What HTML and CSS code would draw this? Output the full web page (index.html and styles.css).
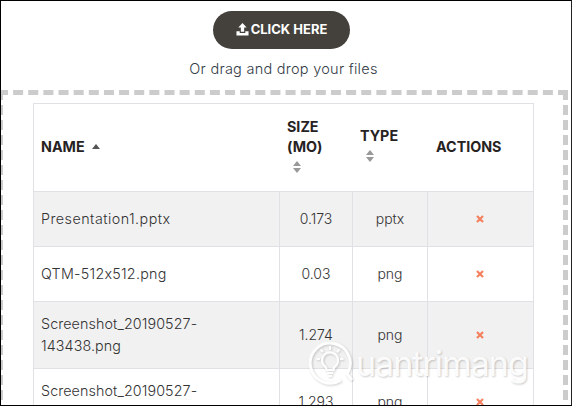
FILE: index.html
```html
<!DOCTYPE html>
<html lang="en">
<head>
<meta charset="utf-8">
<title>Upload</title>
<link rel="stylesheet" href="styles.css">
</head>
<body>
<main class="frame">
  <section class="upload">
    <button class="upload-btn" type="button">
      <svg class="upload-icon" viewBox="0 0 14 14" aria-hidden="true"><path d="M7 0 L11.500 4.800 H8.800 V9.500 H5.200 V4.800 H2.500 Z" fill="#fff"/><path d="M0.500 9 H4 V10.800 H10 V9 H13.500 V13.500 H0.500 Z" fill="#fff"/></svg>
      <span>CLICK HERE</span>
    </button>
    <p class="hint">Or drag and drop your files</p>
  </section>
  <section class="dropzone">
    <table class="files">
      <colgroup><col class="c1"><col class="c2"><col class="c3"><col class="c4"></colgroup>
      <thead>
        <tr>
          <th class="head-name"><div class="name-head">NAME <span class="sort-up"></span></div></th>
          <th class="head-size">SIZE<br>(MO)<span class="sort"><i class="up"></i><i class="down"></i></span></th>
          <th class="head-type">TYPE<span class="sort"><i class="up"></i><i class="down"></i></span></th>
          <th class="head-actions">ACTIONS</th>
        </tr>
      </thead>
      <tbody>
        <tr class="short alt"><td class="fname">Presentation1.pptx</td><td class="ctr">0.173</td><td class="ctr">pptx</td><td class="ctr act"><svg class="del" viewBox="0 0 8 8" aria-hidden="true"><path d="M1 1 L7 7 M7 1 L1 7"/></svg></td></tr>
        <tr class="short"><td class="fname mid">QTM-512x512.png</td><td class="ctr">0.03</td><td class="ctr">png</td><td class="ctr act"><svg class="del" viewBox="0 0 8 8" aria-hidden="true"><path d="M1 1 L7 7 M7 1 L1 7"/></svg></td></tr>
        <tr class="tall alt"><td class="fname long">Screenshot_20190527-<br>143438.png</td><td class="ctr">1.274</td><td class="ctr">png</td><td class="ctr act"><svg class="del" viewBox="0 0 8 8" aria-hidden="true"><path d="M1 1 L7 7 M7 1 L1 7"/></svg></td></tr>
        <tr class="tall"><td class="fname long">Screenshot_20190527-<br>143439.png</td><td class="ctr">1.293</td><td class="ctr">png</td><td class="ctr act"><svg class="del" viewBox="0 0 8 8" aria-hidden="true"><path d="M1 1 L7 7 M7 1 L1 7"/></svg></td></tr>
      </tbody>
    </table>
  </section>
  <div class="watermark">
    <svg class="bulb" viewBox="0 0 46 48" aria-hidden="true">
      <g fill="none" stroke="#fff">
        <path d="M33 41 A20 20 0 1 1 39 35 L44 41" stroke-width="3"/>
        <path d="M17.500 28 a8 8 0 1 1 9 0 q-1 1 -1 3 h-7 q0 -2 -1 -3Z" stroke-width="2.200"/>
        <path d="M19 34h6M20 37h4M22 7v4M12.500 10.500l2.500 2.500M31.500 10.500l-2.500 2.500M8.500 20h3.500M32 20h3.500" stroke-width="2"/>
      </g>
    </svg>
    <span class="wm-text">uantrimang</span>
  </div>
</main>
</body>
</html>
```
FILE: styles.css
```css
* { box-sizing: border-box; }
html, body { margin: 0; padding: 0; background: #fff; }
body { width: 572px; height: 406px; overflow: hidden; font-family: Inter, "Open Sans", sans-serif; font-feature-settings: "calt" 0; color: #3d3d3d; }
.frame { position: relative; width: 572px; height: 406px; overflow: hidden; border-top: 1px solid #000; border-left: 1px solid #000; border-right: 1px solid #222; border-bottom: 1px solid #000; }
.upload { display: flex; flex-direction: column; align-items: center; padding-top: 10px; height: 89px; }
.upload-btn { display: flex; align-items: center; justify-content: center; gap: 2px; width: 137px; height: 38px; margin-right: 9px; border: 0; border-radius: 19px; background: #44403c; color: #fff; font: 700 13px Inter, sans-serif; font-feature-settings: "calt" 0; padding: 0 0 2px; }
.upload-icon { width: 13px; height: 13px; }
.hint { margin: 12px 5px 0 0; font-size: 14.500px; font-weight: 300; line-height: 16px; color: #333c47; letter-spacing: 0.26px; }
.dropzone { margin: 0 3px 0 -3px; height: 400px; border: 5px dashed #ccc; padding: 8px 0 0 30px; }
.files { width: 500px; border-collapse: collapse; table-layout: fixed; font-size: 14px; font-weight: 300; color: #333; }
.c1 { width: 246px; } .c2 { width: 73px; } .c3 { width: 75px; } .c4 { width: 106px; }
.files th, .files td { border: 1px solid #dfe1e5; }
.files th { height: 88px; border-left-color: transparent; border-right-color: transparent; padding: 0 0 2px 7px; text-align: left; font-weight: 700; font-size: 14.300px; line-height: 20px; color: #26221f; }
.files th.head-name { border-left-color: #dfe1e5; }
.files th.head-actions { border-right-color: #dfe1e5; padding-left: 8px; }
.files th.head-size { padding-bottom: 5px; }
.files th.head-type { padding-bottom: 7px; }
.files td { padding: 0 7px; line-height: 22px; }
.files td.act { padding-right: 8px; }
.fname { font-size: 14.300px; letter-spacing: 0.47px; }
.fname.mid { letter-spacing: 0.25px; }
.fname.long { letter-spacing: 0.1px; }
.short td { height: 55px; }
.tall td { height: 67px; }
.alt td { background: #f1f1f1; }
.ctr { text-align: center; }
.del { display: block; width: 8px; height: 8px; margin: 0 auto; fill: none; stroke: #f4805f; stroke-width: 2.200px; }
.name-head { display: flex; align-items: center; gap: 7px; }
.sort-up { width: 0; height: 0; border: 4.500px solid transparent; border-top: 0; border-bottom: 5px solid #555; }
.sort { display: flex; flex-direction: column; gap: 2px; margin: 4px 0 0 6px; }
.sort i { display: block; width: 0; height: 0; border: 4.500px solid transparent; }
.sort .up { border-top: 0; border-bottom: 5px solid #999; }
.sort .down { border-bottom: 0; border-top: 5px solid #999; }
.watermark { position: absolute; left: 307px; top: 338px; display: flex; align-items: center; pointer-events: none; }
.wm-text { margin-left: 2px; color: rgba(255, 255, 255, 0.92); font: 400 34px Inter, sans-serif; font-feature-settings: "calt" 0; letter-spacing: -1px; text-shadow: 1px 1px 2px rgba(0, 0, 0, 0.2); }
.bulb { width: 46px; height: 48px; opacity: 0.92; filter: drop-shadow(1px 1px 1px rgba(0, 0, 0, 0.2)); }
```
